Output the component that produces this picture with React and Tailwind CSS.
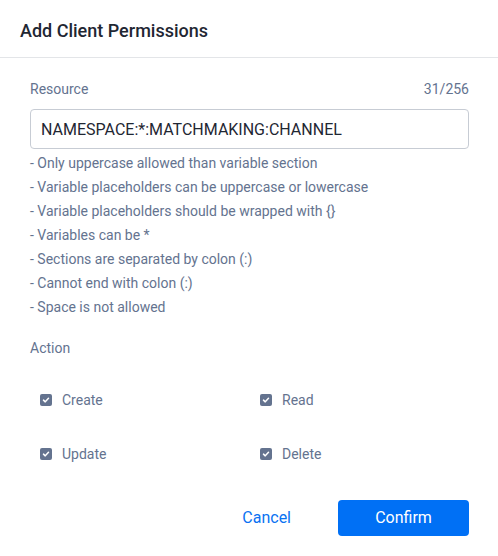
import React, { useState } from 'react'

const rules = [
  '- Only uppercase allowed than variable section',
  '- Variable placeholders can be uppercase or lowercase',
  '- Variable placeholders should be wrapped with {}',
  '- Variables can be *',
  '- Sections are separated by colon (:)',
  '- Cannot end with colon (:)',
  '- Space is not allowed',
]

function Check({ label, checked, onChange }) {
  return (
    <label className="flex items-center gap-[10px] h-[20px] cursor-pointer">
      <span
        onClick={onChange}
        className="flex h-[12px] w-[12px] items-center justify-center rounded-[2px] bg-[#64738f]"
      >
        {checked && (
          <svg viewBox="0 0 12 12" className="h-[10px] w-[10px]">
            <path d="M3 6.2 L5.1 8.2 L9 4" fill="none" stroke="white" strokeWidth="1.8" strokeLinecap="round" strokeLinejoin="round" />
          </svg>
        )}
      </span>
      <span className="text-[14px] text-[#64738f]">{label}</span>
    </label>
  )
}

export default function App() {
  const [value, setValue] = useState('NAMESPACE:*:MATCHMAKING:CHANNEL')
  const [actions, setActions] = useState({ Create: true, Read: true, Update: true, Delete: true })
  const toggle = (k) => setActions((a) => ({ ...a, [k]: !a[k] }))

  return (
    <div className="h-[556px] w-[498px] bg-white font-['Roboto',sans-serif]">
      <div className="flex h-[58px] items-center border-b border-[#e3e5e8] px-5 pt-[3px]">
        <h1 className="text-[18px] font-medium text-[#1f2733]">Add Client Permissions</h1>
      </div>

      <div className="pl-[30px] pr-[29px] pt-[21px]">
        <div className="flex items-center justify-between h-[20px] text-[14px] text-[#64738f]">
          <span>Resource</span>
          <span>{value.length}/256</span>
        </div>
        <input
          value={value}
          onChange={(e) => setValue(e.target.value)}
          className="mt-[10px] h-[40px] w-full rounded-[4px] border border-[#c7ccd4] px-[10px] text-[16px] text-[#1f2733] outline-none"
        />
        <div className="mt-[2px] text-[14px] leading-[24px] text-[#64738f]">
          {rules.map((r) => (
            <div key={r}>{r}</div>
          ))}
        </div>

        <div className="mt-[19px] h-[20px] text-[14px] leading-[20px] text-[#64738f]">Action</div>

        <div className="mt-[32px] grid grid-cols-[220px_1fr] gap-y-[34px] pl-[10px]">
          {['Create', 'Read', 'Update', 'Delete'].map((k) => (
            <Check key={k} label={k} checked={actions[k]} onChange={() => toggle(k)} />
          ))}
        </div>

        <div className="mt-[36px] flex items-center justify-end">
          <button className="mr-[47px] text-[16px] text-[#0a72f2]">Cancel</button>
          <button className="h-[36px] w-[131px] rounded-[4px] bg-[#0070f5] text-[16px] text-white">Confirm</button>
        </div>
      </div>
    </div>
  )
}
